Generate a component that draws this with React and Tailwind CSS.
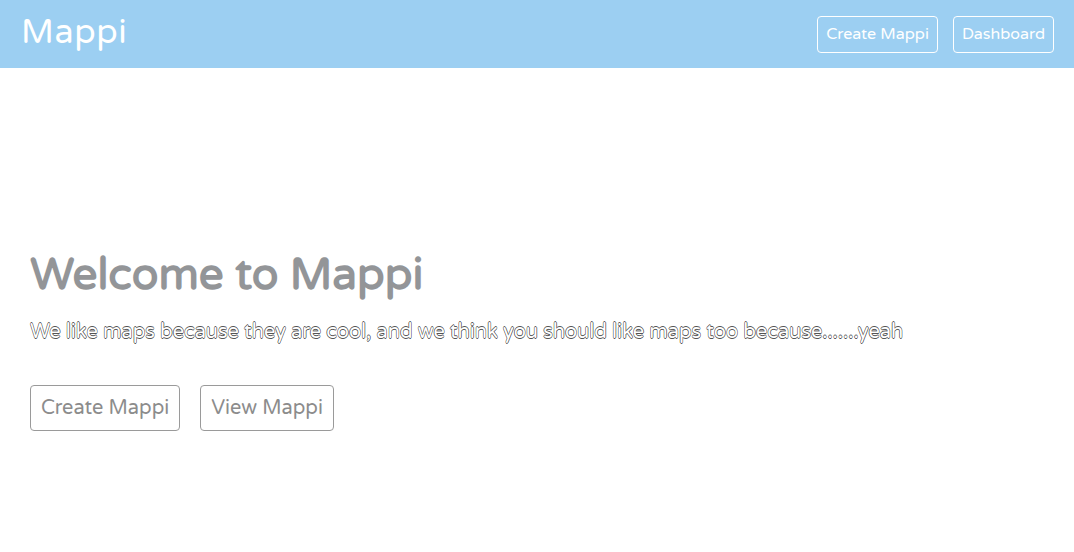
export default function App() {
  return (
    <div className="w-[1074px] h-[552px] bg-white flex flex-col font-['Varela_Round','Open_Sans',sans-serif]">
      <nav className="h-[68px] bg-[#9ccff2] flex items-center justify-between pl-[21px] pr-[20px]">
        <span className="text-white text-[34px] leading-none tracking-[0.6px] pb-[2px]">Mappi</span>
        <div className="flex items-center gap-[15px]">
          <button className="h-[37px] px-[8px] border border-white rounded-[4px] text-white text-[16px]">Create Mappi</button>
          <button className="h-[37px] px-[8px] border border-white rounded-[4px] text-white text-[16px]">Dashboard</button>
        </div>
      </nav>
      <main className="flex-1 flex flex-col justify-center px-[30px] pb-[20px]">
        <h1 className="text-[#939598] text-[44px] font-bold leading-none mt-[84px]">Welcome to Mappi</h1>
        <p className="mt-[24px] text-white text-[20px] leading-none [text-shadow:-0.6px_0_#555,0.6px_0_#555,0_-0.6px_#555,0_0.6px_#555]">
          We like maps because they are cool, and we think you should like maps too because.......yeah
        </p>
        <div className="flex gap-[20px] mt-[43px]">
          <button className="h-[46px] px-[10px] border border-[#9a9a9a] rounded-[4px] text-[#8c8c8c] text-[20px]">Create Mappi</button>
          <button className="h-[46px] px-[10px] border border-[#9a9a9a] rounded-[4px] text-[#8c8c8c] text-[20px]">View Mappi</button>
        </div>
      </main>
    </div>
  );
}
